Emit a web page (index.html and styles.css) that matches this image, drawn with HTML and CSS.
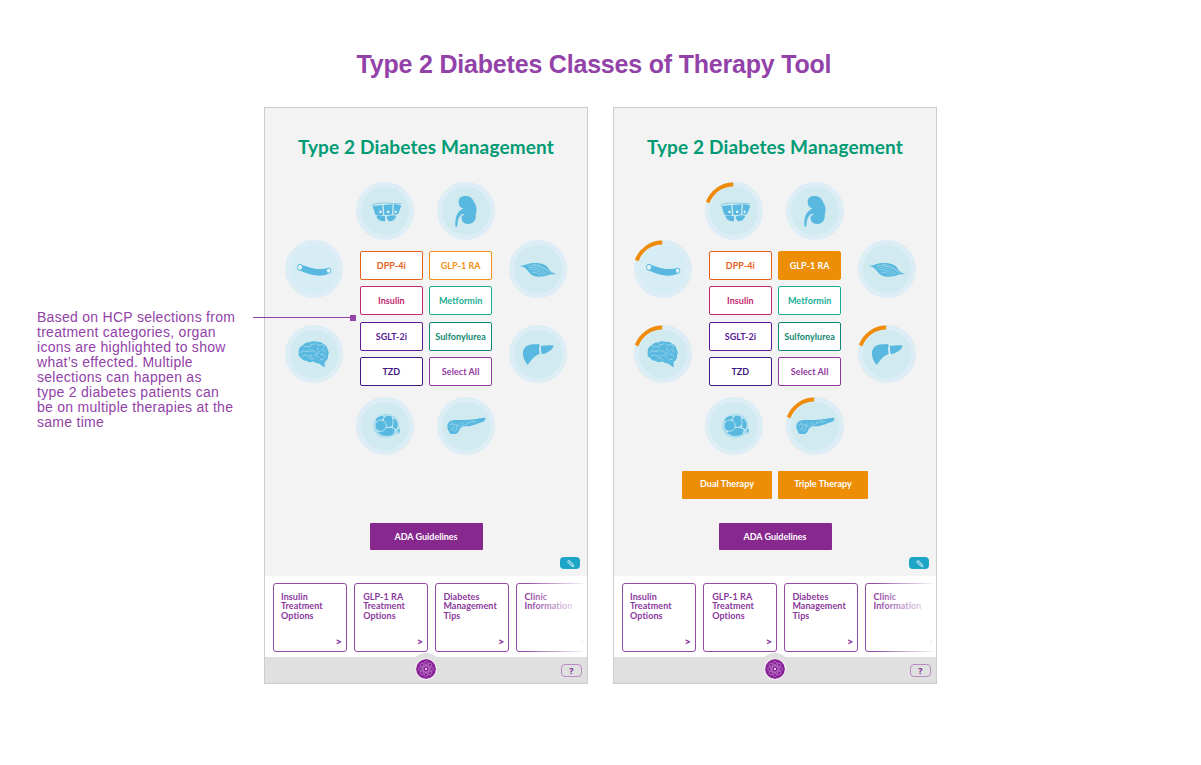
FILE: index.html
```
<!DOCTYPE html>
<html lang="en">
<head>
    <meta charset="UTF-8">
    <title>Type 2 Diabetes Classes of Therapy Tool</title>
    <link rel="stylesheet" href="styles.css">
</head>
<body>
<!-- shared icons -->
<svg class="defs">
    <symbol id="gut" viewBox="0 0 174 174">
        <path d="M44 71Q58 62 80 63T136 65" fill="none" stroke="#7cc6e2" stroke-width="2.500"/>
        <path d="M50 72L79 69 81 98Q69 101 58 98ZM83 69L110 67 108 97Q96 101 85 98ZM114 67Q126 65 136 71L127 95Q119 100 112 97ZM62 101Q75 99 87 102V118Q68 119 62 106ZM93 103Q108 98 121 101 116 118 99 118L92 109Z"/>
        <path d="M70 86h7v7h-7zM93 86h7v7h-7zM116 86h6v7h-6z" fill="#e2f4fa"/>
    </symbol>
    <symbol id="kidney" viewBox="0 0 174 174">
        <path d="M65 60C64 47 76 40 88 42 103 43 109 54 113 64 121 76 119 89 116 100 118 116 108 126 94 126 79 127 72 116 74 103L84 97Q74 93 69 102 61 113 61 134L55 133C54 111 58 93 72 84L79 79C69 77 65 70 65 60Z"/>
    </symbol>
    <symbol id="vessel" viewBox="0 0 174 174">
        <path d="M45 73C68 79 92 94 130 84L136 98C112 114 77 107 43 91Z"/>
        <ellipse cx="45" cy="82" rx="7.500" ry="9" fill="#e3f5fb" stroke="#58b8df" stroke-width="3"/>
        <ellipse cx="131" cy="92" rx="6.500" ry="8" fill="#e3f5fb" stroke="#58b8df" stroke-width="3"/>
    </symbol>
    <symbol id="brain" viewBox="0 0 174 174">
        <path d="M41 84Q39 68 53 61 61 51 73 52 84 46 95 50 109 49 115 57 126 61 127 72 134 82 129 92 130 104 119 110L119 127Q110 122 104 116 90 115 85 109 74 116 65 107 53 109 49 99 39 95 41 84Z"/>
        <path d="M55 65Q63 61 68 65T80 61M75 57Q82 62 89 57M94 56Q99 64 108 60T118 68M47 82Q55 74 63 79T74 73M78 79Q89 74 92 83T105 79M110 72Q119 73 122 82M51 93Q60 86 69 93T80 90M87 91Q98 88 99 98M107 88Q116 85 119 94M74 101Q81 96 88 104M105 105L115 102M99 69V77" fill="none" stroke="#b5e1ef" stroke-width="2" stroke-linecap="round"/>
    </symbol>
    <symbol id="muscle" viewBox="0 0 174 174">
        <path d="M34 77C48 78 53 71 66 70C98 67 112 74 121 89C127 97 133 99 140 101V103C129 102 124 103 113 107C92 112 74 111 65 102C53 91 51 81 34 79Z"/>
        <path d="M55 77Q90 72 127 99M58 83Q83 78 116 102M62 89Q82 86 108 105M68 96Q84 94 98 108M72 73Q94 73 118 93" fill="none" stroke="#a9dced" stroke-width="1.800"/>
    </symbol>
    <symbol id="liver" viewBox="0 0 174 174">
        <path d="M42 88C41 74 48 62 63 59C74 57 81 58 91 57L92 86C82 91 74 95 69 103C64 109 61 115 55 120C48 110 42 99 42 88ZM95 63C108 62 121 59 134 62C131 73 121 79 113 83Q104 88 97 87Z"/>
        <path d="M92 66L95 88" fill="none" stroke="#e5f5fb" stroke-width="3.500"/>
    </symbol>
    <symbol id="fat" viewBox="0 0 174 174">
        <ellipse cx="91" cy="86" rx="39" ry="36" fill="#a4d9eb"/>
        <path d="M117 92h14v17q-8 6-14-3Z" fill="#a4d9eb"/>
        <g stroke="#e0f4f9" stroke-width="2">
            <path d="M56 72Q62 55 83 55L85 67Q72 70 69 76Z"/>
            <rect x="82" y="55" width="31" height="36" rx="14"/>
            <path d="M109 62Q126 66 127 85L122 99 109 92Q114 78 109 62Z"/>
            <path d="M64 105Q79 99 87 92 104 88 117 96 118 112 105 117 78 123 64 105Z"/>
            <circle cx="74" cy="86" r="17"/>
        </g>
        <path d="M124 99L130 96Q133 102 130 108Z"/>
    </symbol>
    <symbol id="pancreas" viewBox="0 0 174 174">
        <path d="M31 88C31 75 42 69 55 69C85 70 111 68 129 64C140 61 145 62 145 65C145 73 136 75 129 77C113 83 101 88 87 88C75 88 71 93 67 98C63 111 55 112 45 111C36 110 36 104 35 101C31 97 31 92 31 88Z"/>
        <path d="M38 84Q50 78 60 85T91 80 119 74M45 94L54 87 66 79M61 86L58 101M76 76L80 84M91 74L96 81M107 73L111 80M41 76L50 83M40 100L49 94 55 104" fill="none" stroke="#b2e0ee" stroke-width="2" stroke-dasharray="6 2"/>
    </symbol>
    <symbol id="arc" viewBox="0 0 58 58">
        <path d="M2.700 20.500A27.200 27.200 0 0 1 28.200 2.500" fill="none" stroke="#ef8b08" stroke-width="3.800"/>
    </symbol>
    <symbol id="flower" viewBox="0 0 20 20">
        <circle cx="10" cy="10" r="10" fill="#8a2299"/>
        <g fill="none" stroke="#c48bd0" stroke-width=".6">
            <ellipse cx="10" cy="10" rx="7.500" ry="3"/>
            <ellipse cx="10" cy="10" rx="7.500" ry="3" transform="rotate(45 10 10)"/>
            <ellipse cx="10" cy="10" rx="7.500" ry="3" transform="rotate(90 10 10)"/>
            <ellipse cx="10" cy="10" rx="7.500" ry="3" transform="rotate(135 10 10)"/>
        </g>
        <circle cx="10" cy="10" r="1" fill="#fff"/>
    </symbol>
    <symbol id="pencil" viewBox="0 0 10 10">
        <path d="M1.500 3L3.300 1.300 8 5.800 9 8.800 6 7.800Z" fill="#8bd4e5" stroke="#d5f2f8" stroke-width=".7"/>
        <path d="M3 2.800L7 7" stroke="#239fbc" stroke-width=".6"/>
    </symbol>
</svg>

<h1>Type 2 Diabetes Classes of Therapy Tool</h1>
<div class="board">
    <p class="note">Based on HCP selections from<br>treatment categories, organ<br>icons are highlighted to show<br>what’s effected. Multiple<br>selections can happen as<br>type 2 diabetes patients can<br>be on multiple therapies at the<br>same time</p>
    <span class="pointer"></span>

    <div class="phone">
        <div class="screen">
            <h2>Type 2 Diabetes Management</h2>
            <div class="stage">
                <div class="side">
                    <div class="organ light"><svg><use href="#vessel"/></svg></div>
                    <div class="organ"><svg><use href="#brain"/></svg></div>
                </div>
                <div class="center">
                    <div class="pair">
                        <div class="organ"><svg><use href="#gut"/></svg></div>
                        <div class="organ"><svg><use href="#kidney"/></svg></div>
                    </div>
                    <div class="drugs">
                        <a class="drug dpp">DPP-4i</a>
                        <a class="drug glp">GLP-1 RA</a>
                        <a class="drug insulin">Insulin</a>
                        <a class="drug metformin">Metformin</a>
                        <a class="drug sglt">SGLT-2i</a>
                        <a class="drug sulf">Sulfonylurea</a>
                        <a class="drug tzd">TZD</a>
                        <a class="drug all">Select All</a>
                    </div>
                    <div class="pair">
                        <div class="organ"><svg><use href="#fat"/></svg></div>
                        <div class="organ"><svg><use href="#pancreas"/></svg></div>
                    </div>
                </div>
                <div class="side">
                    <div class="organ"><svg><use href="#muscle"/></svg></div>
                    <div class="organ"><svg><use href="#liver"/></svg></div>
                </div>
            </div>
            <div class="therapy"></div>
            <a class="ada">ADA Guidelines</a>
            <a class="edit"><svg><use href="#pencil"/></svg></a>
        </div>
        <div class="cards">
            <div class="card">Insulin<br>Treatment<br>Options<b>&gt;</b></div>
            <div class="card">GLP-1 RA<br>Treatment<br>Options<b>&gt;</b></div>
            <div class="card">Diabetes<br>Management<br>Tips<b>&gt;</b></div>
            <div class="card">Clinic<br>Information<b>&gt;</b></div>
        </div>
        <div class="footer">
            <a class="home"><svg><use href="#flower"/></svg></a>
            <a class="help">?</a>
        </div>
    </div>

    <div class="phone">
        <div class="screen">
            <h2>Type 2 Diabetes Management</h2>
            <div class="stage">
                <div class="side">
                    <div class="organ light"><svg><use href="#vessel"/></svg><svg class="arc"><use href="#arc"/></svg></div>
                    <div class="organ"><svg><use href="#brain"/></svg><svg class="arc"><use href="#arc"/></svg></div>
                </div>
                <div class="center">
                    <div class="pair">
                        <div class="organ"><svg><use href="#gut"/></svg><svg class="arc"><use href="#arc"/></svg></div>
                        <div class="organ"><svg><use href="#kidney"/></svg></div>
                    </div>
                    <div class="drugs">
                        <a class="drug dpp">DPP-4i</a>
                        <a class="drug glp select">GLP-1 RA</a>
                        <a class="drug insulin">Insulin</a>
                        <a class="drug metformin">Metformin</a>
                        <a class="drug sglt">SGLT-2i</a>
                        <a class="drug sulf">Sulfonylurea</a>
                        <a class="drug tzd">TZD</a>
                        <a class="drug all">Select All</a>
                    </div>
                    <div class="pair">
                        <div class="organ"><svg><use href="#fat"/></svg></div>
                        <div class="organ"><svg><use href="#pancreas"/></svg><svg class="arc"><use href="#arc"/></svg></div>
                    </div>
                </div>
                <div class="side">
                    <div class="organ"><svg><use href="#muscle"/></svg></div>
                    <div class="organ"><svg><use href="#liver"/></svg><svg class="arc"><use href="#arc"/></svg></div>
                </div>
            </div>
            <div class="therapy">
                <a>Dual Therapy</a>
                <a>Triple Therapy</a>
            </div>
            <a class="ada">ADA Guidelines</a>
            <a class="edit"><svg><use href="#pencil"/></svg></a>
        </div>
        <div class="cards">
            <div class="card">Insulin<br>Treatment<br>Options<b>&gt;</b></div>
            <div class="card">GLP-1 RA<br>Treatment<br>Options<b>&gt;</b></div>
            <div class="card">Diabetes<br>Management<br>Tips<b>&gt;</b></div>
            <div class="card">Clinic<br>Information<b>&gt;</b></div>
        </div>
        <div class="footer">
            <a class="home"><svg><use href="#flower"/></svg></a>
            <a class="help">?</a>
        </div>
    </div>
</div>
</body>
</html>
```
FILE: styles.css
```
* {
    box-sizing: border-box;
}
body {
    margin: 0;
    background: #fff;
    font-family: "Liberation Sans", Arial, sans-serif;
}
.defs {
    display: none;
}
h1 {
    margin: 0;
    height: 107px;
    padding: 49px 13px 0 0;
    text-align: center;
    font-size: 25px;
    line-height: 30px;
    letter-spacing: -.2px;
    color: #9242a8;
    white-space: nowrap;
}
.board {
    position: relative;
    display: flex;
    padding-left: 37px;
}
.note {
    width: 227px;
    margin: 0;
    padding-top: 203px;
    font-size: 14px;
    line-height: 15px;
    letter-spacing: .28px;
    color: #9242a8;
    white-space: nowrap;
}
/* line from the note to the buttons */
.pointer {
    position: absolute;
    left: 253px;
    top: 210px;
    width: 98px;
    height: 1px;
    background: #9242a8;
    z-index: 2;
}
.pointer:after {
    content: "";
    position: absolute;
    right: -5px;
    top: -2px;
    width: 6px;
    height: 6px;
    background: #9242a8;
}
.phone {
    width: 324px;
    height: 577px;
    margin-right: 25px;
    border: 1px solid #ccc;
    font-family: Lato, sans-serif;
    font-weight: bold;
    overflow: hidden;
}
.screen {
    display: flex;
    flex-direction: column;
    align-items: center;
    height: 468px;
    background: #f3f3f3;
}
h2 {
    margin: 0;
    padding-top: 25px;
    height: 74px;
    font-size: 19px;
    line-height: 28px;
    letter-spacing: .15px;
    color: #009b74;
    white-space: nowrap;
}
.stage {
    display: flex;
    justify-content: space-between;
    width: 282px;
    height: 273px;
}
.side {
    display: flex;
    flex-direction: column;
    gap: 27px;
    padding-top: 58px;
}
.center {
    width: 139px;
}
.pair {
    display: flex;
    justify-content: space-between;
    margin: 0 1px 0 -1px;
}
.organ {
    position: relative;
    width: 58px;
    height: 58px;
    border: 5px solid #dcedf5;
    border-radius: 50%;
    background: #d0eaf0;
}
.light {
    background: #d7edf5;
}
.organ svg {
    display: block;
    width: 58px;
    height: 58px;
    margin: -5px;
    fill: #58b8df;
}
.organ .arc {
    position: absolute;
    left: 0;
    top: 0;
}
.drugs {
    display: grid;
    grid-template-columns: 63px 63px;
    grid-template-rows: repeat(4, 29px);
    gap: 6.3px;
    justify-content: center;
    padding: 11px 0;
}
.drug {
    display: flex;
    align-items: center;
    justify-content: center;
    border: 1px solid;
    border-radius: 2px;
    background: #fff;
    font-size: 9px;
    letter-spacing: .05px;
    white-space: nowrap;
}
.dpp {
    color: #e8601c;
}
.glp {
    color: #ef9118;
}
.insulin {
    color: #c4286c;
}
.metformin {
    color: #18ae92;
}
.sglt {
    color: #5c1a98;
}
.sulf {
    color: #118873;
}
.tzd {
    color: #401883;
}
.all {
    color: #91379d;
}
.select {
    border-color: #ee8e07;
    background: #ee8e07;
    color: #fff;
}
.therapy {
    display: flex;
    gap: 6px;
    height: 28px;
    margin-top: 16px;
}
.therapy a {
    width: 90px;
    border-radius: 1px;
    background: #ee8e07;
    color: #fff;
    font-size: 9px;
    line-height: 26px;
    letter-spacing: .05px;
    text-align: center;
}
.ada {
    width: 113px;
    height: 27px;
    margin-top: 24px;
    border-radius: 1px;
    background: #87288f;
    color: #fff;
    font-size: 9px;
    line-height: 27px;
    text-align: center;
}
.edit {
    display: flex;
    align-items: center;
    justify-content: center;
    align-self: flex-end;
    width: 20px;
    height: 12px;
    margin: 7px 7px 0 0;
    border-radius: 4px;
    background: #1da5c8;
}
.edit svg {
    width: 9px;
    height: 9px;
}
.cards {
    position: relative;
    display: flex;
    gap: 7px;
    height: 81px;
    padding: 7px 0 0 7.5px;
    background: #fff;
    overflow: hidden;
}
/* fades out the last card */
.cards:after {
    content: "";
    position: absolute;
    right: 0;
    top: 0;
    width: 62px;
    height: 81px;
    background: linear-gradient(to right, rgba(255,255,255,0), #fff);
}
.card {
    position: relative;
    flex: 0 0 74.2px;
    height: 69px;
    padding: 7.5px 0 0 7.5px;
    border: 1px solid #934ba6;
    border-radius: 3px;
    color: #8b389d;
    font-size: 9px;
    line-height: 9.6px;
    letter-spacing: .07px;
    white-space: nowrap;
}
.card:nth-child(2) {
    padding-left: 8.5px;
}
.card b {
    position: absolute;
    right: 4px;
    bottom: 4px;
    font-family: "Open Sans", sans-serif;
}
.footer {
    position: relative;
    display: flex;
    align-items: center;
    justify-content: flex-end;
    height: 26px;
    padding-right: 5px;
    background: #e0e0e0;
}
.home {
    position: absolute;
    left: 145px;
    top: -4px;
    width: 32px;
    height: 32px;
    padding: 6px;
    border-radius: 50%;
    background: #e0e0e0;
}
.home svg {
    display: block;
    width: 20px;
    height: 20px;
    border-radius: 50%;
    box-shadow: 0 0 0 1px #f0e8f1;
}
.help {
    width: 21px;
    height: 13px;
    border: 1px solid #b88bc3;
    border-radius: 4px;
    color: #7c258d;
    font-family: "Open Sans", sans-serif;
    font-size: 9px;
    line-height: 11px;
    text-align: center;
}
```
